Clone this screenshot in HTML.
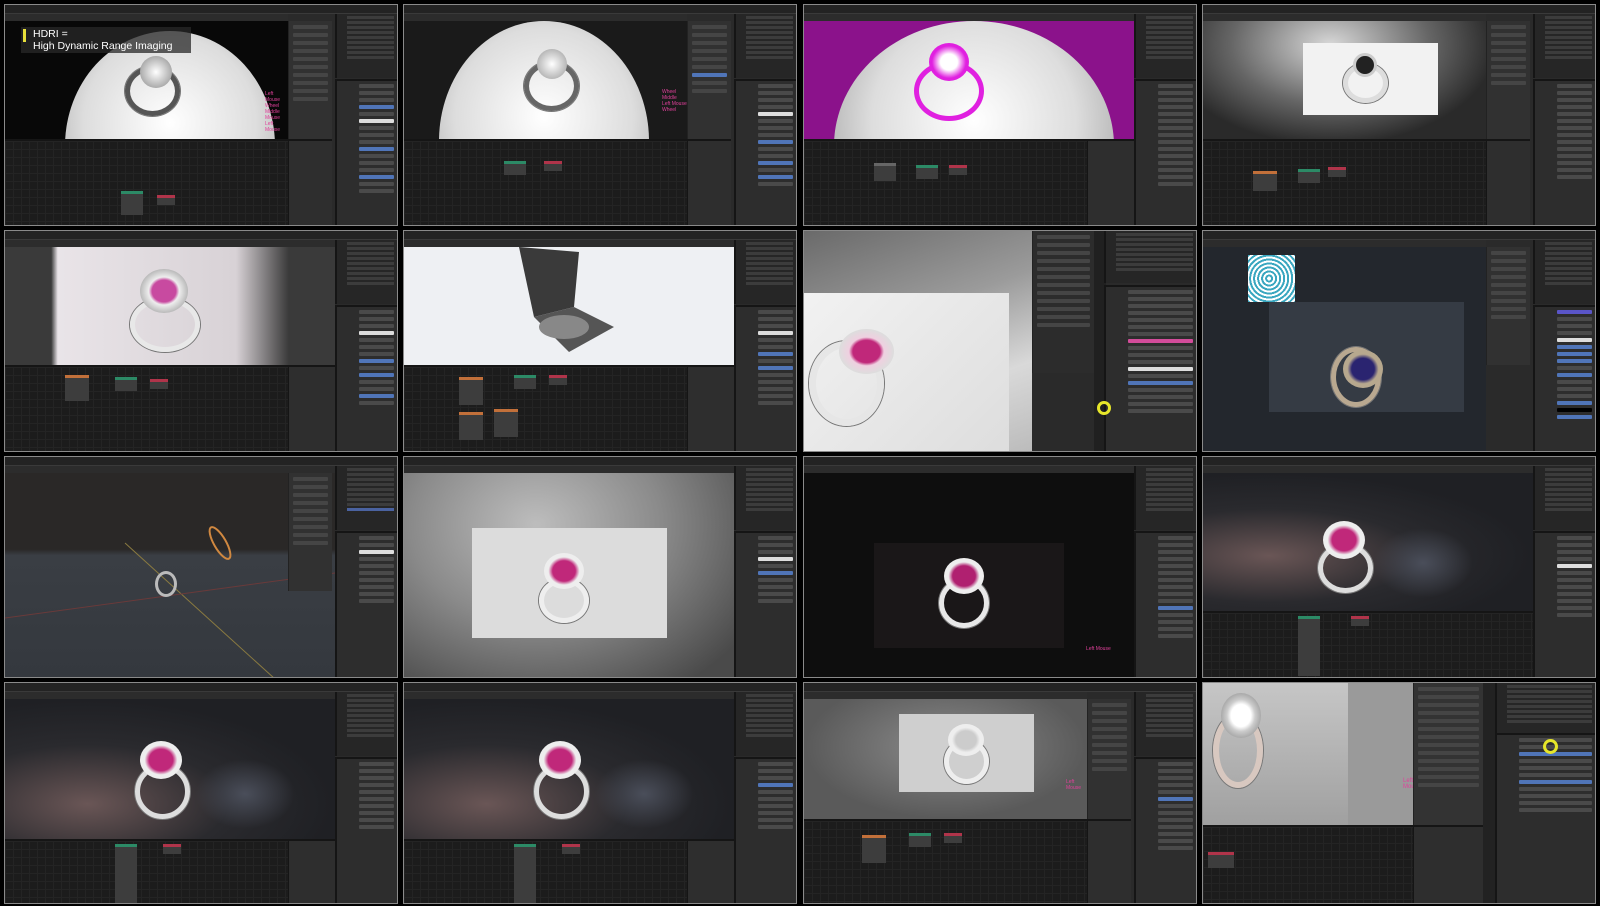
<!DOCTYPE html>
<html><head><meta charset="utf-8"><style>
*{margin:0;padding:0;box-sizing:border-box}
body{width:1600px;height:906px;background:#000;position:relative;overflow:hidden;font-family:"Liberation Sans",sans-serif}
.t{position:absolute;width:394px;height:222px;border:1px solid #8a8a8a;background:#2a2a2a;overflow:hidden}
.t>div{position:absolute}
.tb{left:0;top:0;width:100%;height:9px;background:#232323;border-bottom:1px solid #3a3a3a}
.vh{left:0;top:9px;height:7px;background:#2c2c2c}
.vp{left:0;top:16px;overflow:hidden}
.np{background:#313131;border-left:1px solid #222}
.np i{display:block;height:4px;margin:4px 4px;background:#454545;border-radius:1px}
.ol{right:0;top:9px;width:62px;height:64px;background:#262626;border-left:2px solid #151515}
.ol i{display:block;height:3px;margin:2px 3px 2px 10px;background:#3c3c3c}
.pr{right:0;top:74px;width:62px;bottom:0;background:#2d2d2d;border-left:2px solid #151515;border-top:2px solid #151515}
.pr i{display:block;height:4px;margin:3px 3px 3px 22px;background:#4a4a4a;border-radius:1px}
.pr i.b{background:#5075b8}
.pr i.w{background:#ddd}
.pr i.p{background:#d34c9a}
.ne{left:0;background:#1c1c1c;background-image:linear-gradient(#242424 1px,transparent 1px),linear-gradient(90deg,#242424 1px,transparent 1px);background-size:8px 8px;border-top:2px solid #151515}
.ns{background:#2e2e2e;border-top:2px solid #151515;border-left:1px solid #151515}
.node{position:absolute;width:22px;height:14px;background:#3d3d3d;border-top:3px solid #2c8a66}
.node.r{border-top-color:#b0344a;width:18px;height:10px}
.node.o{border-top-color:#c2703a;width:24px;height:28px}
.ring{position:absolute;border-radius:50%;border:5px solid #cfcfcf;box-shadow:0 0 0 1px #777}
.gem{position:absolute;border-radius:50%}
.dome{position:absolute;border-radius:50%;background:radial-gradient(circle at 50% 40%,#fff,#ddd 50%,#aaa 80%)}
</style></head><body>

<!-- ROW 1 -->
<div class="t" style="left:4px;top:4px">
 <div class="tb"></div><div class="vh" style="width:283px"></div>
 <div class="vp" style="width:283px;height:118px;background:#080808">
  <div class="dome" style="left:60px;top:10px;width:210px;height:230px"></div>
  <div class="ring" style="left:120px;top:45px;width:55px;height:50px;border-color:#555"></div>
  <div class="gem" style="left:135px;top:35px;width:32px;height:32px;background:radial-gradient(#fff,#888)"></div>
  <div style="left:16px;top:6px;position:absolute;width:170px;height:26px;background:rgba(40,40,40,.75)"></div>
  <div style="left:18px;top:8px;position:absolute;width:3px;height:13px;background:#e8e03a"></div>
  <div style="left:28px;top:7px;position:absolute;color:#fff;font-size:10.5px;line-height:12px">HDRI =<br>High Dynamic Range Imaging</div>
  <div style="left:260px;top:70px;position:absolute;color:#e0409a;font-size:5px;line-height:6px">Left Mouse<br>Wheel<br>Middle Mouse<br>Left Mouse</div>
 </div>
 <div class="np" style="left:283px;top:16px;width:44px;height:118px"><i></i><i></i><i></i><i></i><i></i><i></i><i></i><i></i><i></i><i></i></div>
 <div class="ne" style="top:134px;width:283px;height:88px"><div class="node" style="left:116px;top:50px;height:24px"></div><div class="node r" style="left:152px;top:54px"></div></div>
 <div class="ns" style="left:283px;top:134px;width:44px;height:88px"></div>
 <div class="ol"><i></i><i></i><i></i><i></i><i></i><i></i><i></i><i></i><i></i></div>
 <div class="pr"><i></i><i></i><i></i><i class="b"></i><i></i><i class="w"></i><i></i><i></i><i></i><i class="b"></i><i></i><i></i><i></i><i class="b"></i><i></i><i></i></div>
</div>

<div class="t" style="left:403px;top:4px">
 <div class="tb"></div><div class="vh" style="width:283px"></div>
 <div class="vp" style="width:283px;height:118px;background:#1a1a1a">
  <div class="dome" style="left:35px;top:0px;width:210px;height:240px"></div>
  <div class="ring" style="left:120px;top:40px;width:55px;height:50px;border-color:#666"></div>
  <div class="gem" style="left:133px;top:28px;width:30px;height:30px;background:radial-gradient(#fff,#999)"></div>
  <div style="left:258px;top:68px;position:absolute;color:#e0409a;font-size:5px;line-height:6px">Wheel<br>Middle<br>Left Mouse<br>Wheel</div>
 </div>
 <div class="np" style="left:283px;top:16px;width:44px;height:118px"><i></i><i></i><i></i><i></i><i></i><i></i><i style="background:#5075b8"></i><i></i><i></i></div>
 <div class="ne" style="top:134px;width:283px;height:88px"><div class="node" style="left:100px;top:20px"></div><div class="node r" style="left:140px;top:20px"></div></div>
 <div class="ns" style="left:283px;top:134px;width:44px;height:88px"></div>
 <div class="ol"><i></i><i></i><i></i><i></i><i></i><i></i><i></i><i></i><i></i></div>
 <div class="pr"><i></i><i></i><i></i><i></i><i class="w"></i><i></i><i></i><i></i><i class="b"></i><i></i><i></i><i class="b"></i><i></i><i class="b"></i><i></i></div>
</div>

<div class="t" style="left:803px;top:4px">
 <div class="tb"></div><div class="vh" style="width:330px"></div>
 <div class="vp" style="width:330px;height:118px;background:#8b128b">
  <div class="dome" style="left:30px;top:0px;width:280px;height:250px"></div>
  <div class="ring" style="left:110px;top:40px;width:70px;height:60px;border-color:#e020e0;box-shadow:none"></div>
  <div class="gem" style="left:125px;top:22px;width:40px;height:38px;background:radial-gradient(#fff 30%,#e020e0 60%)"></div>
 </div>
 <div class="ne" style="top:134px;width:283px;height:88px"><div class="node" style="left:70px;top:22px;border-top-color:#666;height:18px"></div><div class="node" style="left:112px;top:24px"></div><div class="node r" style="left:145px;top:24px"></div></div>
 <div class="ns" style="left:283px;top:134px;width:47px;height:88px"></div>
 <div class="ol"><i></i><i></i><i></i><i></i><i></i><i></i><i></i><i></i><i></i></div>
 <div class="pr"><i></i><i></i><i></i><i></i><i></i><i></i><i></i><i></i><i></i><i></i><i></i><i></i><i></i><i></i><i></i></div>
</div>

<div class="t" style="left:1202px;top:4px">
 <div class="tb"></div><div class="vh" style="width:283px"></div>
 <div class="vp" style="width:283px;height:118px;background:radial-gradient(ellipse at 45% 20%,#d8d8d8,#666 45%,#2a2a2a 75%)">
  <div style="position:absolute;left:100px;top:22px;width:135px;height:72px;background:#f2f2f2"></div>
  <div class="ring" style="left:140px;top:42px;width:45px;height:40px;border-color:#ddd"></div>
  <div class="gem" style="left:150px;top:32px;width:24px;height:24px;background:#222;border:3px solid #ccc"></div>
 </div>
 <div class="np" style="left:283px;top:16px;width:44px;height:118px"><i></i><i></i><i></i><i></i><i></i><i></i><i></i><i></i></div>
 <div class="ne" style="top:134px;width:283px;height:88px"><div class="node o" style="left:50px;top:30px;height:20px"></div><div class="node" style="left:95px;top:28px"></div><div class="node r" style="left:125px;top:26px"></div></div>
 <div class="ns" style="left:283px;top:134px;width:44px;height:88px"></div>
 <div class="ol"><i></i><i></i><i></i><i></i><i></i><i></i><i></i><i></i><i></i></div>
 <div class="pr"><i></i><i></i><i></i><i></i><i></i><i></i><i></i><i></i><i></i><i></i><i></i><i></i><i></i><i></i></div>
</div>

<!-- ROW 2 -->
<div class="t" style="left:4px;top:230px">
 <div class="tb"></div><div class="vh" style="width:330px"></div>
 <div class="vp" style="width:330px;height:118px;background:linear-gradient(90deg,#3a3a3a 0 14%,#e9e4e8 16%,#d8d2d6 70%,#3a3a3a 86%)">
  <div class="ring" style="left:125px;top:50px;width:70px;height:55px;border-color:#e8e8e8"></div>
  <div class="gem" style="left:135px;top:22px;width:48px;height:44px;background:radial-gradient(#c84aa0 35%,#eee 45%,#bbb 70%)"></div>
 </div>
 <div class="ne" style="top:134px;width:283px;height:88px"><div class="node o" style="left:60px;top:8px;height:26px"></div><div class="node" style="left:110px;top:10px"></div><div class="node r" style="left:145px;top:12px"></div></div>
 <div class="ns" style="left:283px;top:134px;width:47px;height:88px"></div>
 <div class="ol"><i></i><i></i><i></i><i></i><i></i><i></i><i></i><i></i><i></i></div>
 <div class="pr"><i></i><i></i><i></i><i class="w"></i><i></i><i></i><i></i><i class="b"></i><i></i><i class="b"></i><i></i><i></i><i class="b"></i><i></i></div>
</div>

<div class="t" style="left:403px;top:230px">
 <div class="tb"></div><div class="vh" style="width:330px"></div>
 <div class="vp" style="width:330px;height:118px;background:#eef0f3">
  <svg width="330" height="118" style="position:absolute;left:0;top:0"><polygon points="115,0 175,5 170,60 130,70" fill="#3a3a3a"/><polygon points="130,70 170,60 210,80 165,105" fill="#555"/><ellipse cx="160" cy="80" rx="25" ry="12" fill="#888"/></svg>
 </div>
 <div class="ne" style="top:134px;width:283px;height:88px"><div class="node o" style="left:55px;top:10px"></div><div class="node o" style="left:55px;top:45px"></div><div class="node o" style="left:90px;top:42px"></div><div class="node" style="left:110px;top:8px"></div><div class="node r" style="left:145px;top:8px"></div></div>
 <div class="ns" style="left:283px;top:134px;width:47px;height:88px"></div>
 <div class="ol"><i></i><i></i><i></i><i></i><i></i><i></i><i></i><i></i><i></i></div>
 <div class="pr"><i></i><i></i><i></i><i class="w"></i><i></i><i></i><i class="b"></i><i></i><i class="b"></i><i></i><i></i><i></i><i></i><i></i></div>
</div>

<div class="t" style="left:803px;top:230px">
 <div class="vp" style="top:0;width:228px;height:222px;background:linear-gradient(160deg,#6a6a6a,#9b9b9b 40%,#d9d9d9 70%,#bbb)">
  <div style="position:absolute;left:0;top:62px;width:205px;height:160px;background:linear-gradient(135deg,#f2f2f2,#ddd)"></div>
  <div class="ring" style="left:5px;top:110px;width:75px;height:85px;border:7px solid #e6e6e6"></div>
  <div class="gem" style="left:35px;top:98px;width:55px;height:45px;background:radial-gradient(#c0287a 35%,#efd0e0 45%,#ddd 70%)"></div>
 </div>
 <div class="np" style="left:228px;top:0;width:62px;height:142px;background:#2c2c2c"><i></i><i></i><i></i><i></i><i></i><i></i><i></i><i></i><i></i><i></i><i></i><i></i></div>
 <div style="left:290px;top:0;width:12px;height:222px;background:#202020"></div>
 <div class="ol" style="width:92px;height:52px;top:0"><i></i><i></i><i></i><i></i><i></i><i></i><i></i><i></i></div>
 <div class="pr" style="width:92px;top:54px"><i></i><i></i><i></i><i></i><i></i><i></i><i></i><i class="p"></i><i></i><i></i><i></i><i class="w"></i><i></i><i class="b"></i><i></i><i></i><i></i><i></i></div>
 <div style="left:293px;top:170px;width:14px;height:14px;border:3px solid #e6e62a;border-radius:50%"></div>
</div>

<div class="t" style="left:1202px;top:230px">
 <div class="tb"></div><div class="vh" style="width:283px"></div>
 <div class="vp" style="width:283px;height:206px;background:#23272d">
  <div style="position:absolute;left:66px;top:55px;width:195px;height:110px;background:#353b44"></div>
  <div style="position:absolute;left:45px;top:8px;width:47px;height:47px;background:repeating-radial-gradient(circle at 45% 50%,#fff 0 2px,#3aa7c0 2px 4px)"></div>
  <div class="ring" style="left:128px;top:100px;width:50px;height:60px;border-color:#b9a890"></div>
  <div class="gem" style="left:140px;top:103px;width:40px;height:38px;background:radial-gradient(#2a2470 40%,#b7a88e 55%)"></div>
 </div>
 <div class="np" style="left:283px;top:16px;width:44px;height:118px"><i></i><i></i><i></i><i></i><i></i><i></i><i></i><i></i><i></i></div>
 <div class="ol"><i></i><i></i><i></i><i></i><i></i><i></i><i></i><i></i><i></i></div>
 <div class="pr"><i class="b" style="background:#5a55c8"></i><i></i><i></i><i></i><i class="w"></i><i class="b"></i><i class="b"></i><i class="b"></i><i></i><i class="b"></i><i></i><i></i><i></i><i class="b"></i><i style="background:#000"></i><i class="b"></i></div>
</div>

<!-- ROW 3 -->
<div class="t" style="left:4px;top:456px">
 <div class="tb"></div><div class="vh" style="width:330px"></div>
 <div class="vp" style="width:330px;height:206px;background:linear-gradient(#2a2827 0 37%,#3a3e44 40%,#34383e)">
  <svg width="330" height="206" style="position:absolute;left:0;top:0"><line x1="120" y1="70" x2="270" y2="206" stroke="#8a7a40" stroke-width="1"/><line x1="0" y1="145" x2="330" y2="100" stroke="#6a3a3a" stroke-width="1"/><ellipse cx="215" cy="70" rx="6" ry="18" fill="none" stroke="#d08840" stroke-width="2" transform="rotate(-30 215 70)"/></svg>
  <div class="ring" style="left:150px;top:98px;width:22px;height:26px;border:3px solid #bbb;box-shadow:none"></div>
 </div>
 <div class="np" style="left:283px;top:16px;width:44px;height:118px"><i></i><i></i><i></i><i></i><i></i><i></i><i></i><i></i><i></i></div>
 <div class="ol"><i></i><i></i><i></i><i></i><i></i><i></i><i></i><i></i><i style="background:#4a62a0"></i></div>
 <div class="pr"><i></i><i></i><i class="w"></i><i></i><i></i><i></i><i></i><i></i><i></i><i></i></div>
</div>

<div class="t" style="left:403px;top:456px">
 <div class="tb"></div><div class="vh" style="width:330px"></div>
 <div class="vp" style="width:330px;height:206px;background:radial-gradient(ellipse at 40% 25%,#bdbdbd,#8a8a8a 45%,#4a4a4a 90%)">
  <div style="position:absolute;left:68px;top:55px;width:195px;height:110px;background:#dcdcdc"></div>
  <div class="ring" style="left:135px;top:105px;width:50px;height:45px;border-color:#eee"></div>
  <div class="gem" style="left:140px;top:80px;width:40px;height:36px;background:radial-gradient(#c0287a 40%,#eee 55%)"></div>
 </div>
 <div class="ol"><i></i><i></i><i></i><i></i><i></i><i></i><i></i><i></i><i></i></div>
 <div class="pr"><i></i><i></i><i></i><i class="w"></i><i></i><i class="b"></i><i></i><i></i><i></i><i></i></div>
</div>

<div class="t" style="left:803px;top:456px">
 <div class="tb"></div><div class="vh" style="width:330px"></div>
 <div class="vp" style="width:330px;height:206px;background:#0e0e0e">
  <div style="position:absolute;left:70px;top:70px;width:190px;height:105px;background:#1a1718"></div>
  <div class="ring" style="left:135px;top:105px;width:50px;height:50px;border-color:#e8e8e8"></div>
  <div class="gem" style="left:140px;top:85px;width:40px;height:36px;background:radial-gradient(#b02070 40%,#eee 55%)"></div>
  <div style="position:absolute;left:282px;top:173px;color:#e0409a;font-size:5px">Left Mouse</div>
 </div>
 <div class="ol"><i></i><i></i><i></i><i></i><i></i><i></i><i></i><i></i><i></i></div>
 <div class="pr"><i></i><i></i><i></i><i></i><i></i><i></i><i></i><i></i><i></i><i></i><i class="b"></i><i></i><i></i><i></i><i></i></div>
</div>

<div class="t" style="left:1202px;top:456px">
 <div class="tb"></div><div class="vh" style="width:330px"></div>
 <div class="vp" style="width:330px;height:138px;background:radial-gradient(ellipse at 20% 60%,#6a5656,#2a2a2e 40%,#1f2024 70%)">
  <div style="position:absolute;left:170px;top:55px;width:100px;height:70px;border-radius:50%;background:radial-gradient(#4a4e5a,transparent 70%)"></div>
  <div class="ring" style="left:115px;top:70px;width:55px;height:50px;border-color:#ddd"></div>
  <div class="gem" style="left:120px;top:48px;width:42px;height:38px;background:radial-gradient(#c0287a 40%,#eee 55%)"></div>
 </div>
 <div class="ne" style="top:154px;width:330px;height:68px"><div class="node" style="left:95px;top:3px;height:60px;border-top-color:#2c8a66"></div><div class="node r" style="left:148px;top:3px"></div></div>
 <div class="ol"><i></i><i></i><i></i><i></i><i></i><i></i><i></i><i></i><i></i></div>
 <div class="pr"><i></i><i></i><i></i><i></i><i class="w"></i><i></i><i></i><i></i><i></i><i></i><i></i><i></i></div>
</div>

<!-- ROW 4 -->
<div class="t" style="left:4px;top:682px">
 <div class="tb"></div><div class="vh" style="width:330px"></div>
 <div class="vp" style="width:330px;height:140px;background:radial-gradient(ellipse at 25% 75%,#6a5656,#2a2a2e 40%,#1f2024 70%)">
  <div style="position:absolute;left:190px;top:60px;width:100px;height:70px;border-radius:50%;background:radial-gradient(#4a4e5a,transparent 70%)"></div>
  <div class="ring" style="left:130px;top:65px;width:55px;height:55px;border-color:#ddd"></div>
  <div class="gem" style="left:135px;top:42px;width:42px;height:38px;background:radial-gradient(#c0287a 40%,#eee 55%)"></div>
 </div>
 <div class="ne" style="top:156px;width:283px;height:66px"><div class="node" style="left:110px;top:3px;height:60px"></div><div class="node r" style="left:158px;top:3px"></div></div>
 <div class="ns" style="left:283px;top:156px;width:47px;height:66px"></div>
 <div class="ol"><i></i><i></i><i></i><i></i><i></i><i></i><i></i><i></i><i></i></div>
 <div class="pr"><i></i><i></i><i></i><i></i><i></i><i></i><i></i><i></i><i></i><i></i></div>
</div>

<div class="t" style="left:403px;top:682px">
 <div class="tb"></div><div class="vh" style="width:330px"></div>
 <div class="vp" style="width:330px;height:140px;background:radial-gradient(ellipse at 25% 75%,#6a5656,#2a2a2e 40%,#1f2024 70%)">
  <div style="position:absolute;left:190px;top:60px;width:100px;height:70px;border-radius:50%;background:radial-gradient(#4a4e5a,transparent 70%)"></div>
  <div class="ring" style="left:130px;top:65px;width:55px;height:55px;border-color:#ddd"></div>
  <div class="gem" style="left:135px;top:42px;width:42px;height:38px;background:radial-gradient(#c0287a 40%,#eee 55%)"></div>
 </div>
 <div class="ne" style="top:156px;width:283px;height:66px"><div class="node" style="left:110px;top:3px;height:60px"></div><div class="node r" style="left:158px;top:3px"></div></div>
 <div class="ns" style="left:283px;top:156px;width:47px;height:66px"></div>
 <div class="ol"><i></i><i></i><i></i><i></i><i></i><i></i><i></i><i></i><i></i></div>
 <div class="pr"><i></i><i></i><i></i><i class="b"></i><i></i><i></i><i></i><i></i><i></i><i></i></div>
</div>

<div class="t" style="left:803px;top:682px">
 <div class="tb"></div><div class="vh" style="width:283px"></div>
 <div class="vp" style="width:283px;height:120px;background:radial-gradient(ellipse at 50% 40%,#8a8a8a,#5a5a5a 70%)">
  <div style="position:absolute;left:95px;top:15px;width:135px;height:78px;background:#cfcfcf"></div>
  <div class="ring" style="left:140px;top:40px;width:45px;height:45px;border-color:#eee"></div>
  <div class="gem" style="left:144px;top:25px;width:36px;height:32px;background:radial-gradient(#ccc 40%,#eee 55%)"></div>
  <div style="position:absolute;left:262px;top:80px;color:#e0409a;font-size:5px">Left Mouse</div>
 </div>
 <div class="np" style="left:283px;top:16px;width:44px;height:120px"><i></i><i></i><i></i><i></i><i></i><i></i><i></i><i></i><i></i></div>
 <div class="ne" style="top:136px;width:283px;height:86px"><div class="node o" style="left:58px;top:14px"></div><div class="node" style="left:105px;top:12px"></div><div class="node r" style="left:140px;top:12px"></div></div>
 <div class="ns" style="left:283px;top:136px;width:44px;height:86px"></div>
 <div class="ol"><i></i><i></i><i></i><i></i><i></i><i></i><i></i><i></i><i></i></div>
 <div class="pr"><i></i><i></i><i></i><i></i><i></i><i class="b"></i><i></i><i></i><i></i><i></i><i></i><i></i><i></i></div>
</div>

<div class="t" style="left:1202px;top:682px">
 <div class="vp" style="top:0;width:210px;height:142px;background:#9a9a9a">
  <div style="position:absolute;left:0;top:0;width:145px;height:142px;background:linear-gradient(#c6c6c6,#a0a0a0)"></div>
  <div class="ring" style="left:10px;top:30px;width:50px;height:75px;border:6px solid #d8c8c0"></div>
  <div class="gem" style="left:18px;top:10px;width:40px;height:45px;background:radial-gradient(#fff 35%,#ccc 50%,#aaa 70%)"></div>
  <div style="position:absolute;left:200px;top:95px;color:#e0409a;font-size:6px">Left Mouse</div>
 </div>
 <div class="np" style="left:210px;top:0;width:70px;height:142px;background:#333"><i></i><i></i><i></i><i></i><i></i><i></i><i></i><i></i><i></i><i></i><i></i><i></i><i></i></div>
 <div class="ne" style="top:142px;width:210px;height:80px"><div class="node r" style="left:5px;top:25px;width:26px;height:16px"></div></div>
 <div class="ns" style="left:210px;top:142px;width:70px;height:80px"></div>
 <div style="left:280px;top:0;width:14px;height:222px;background:#222"></div>
 <div class="ol" style="width:100px;height:50px;top:0"><i></i><i></i><i></i><i></i><i></i><i></i><i></i><i></i></div>
 <div class="pr" style="width:100px;top:50px"><i></i><i></i><i class="b"></i><i></i><i></i><i></i><i class="b"></i><i></i><i></i><i></i><i></i></div>
 <div style="left:340px;top:56px;width:15px;height:15px;border:3px solid #e6e62a;border-radius:50%"></div>
</div>

</body></html>
